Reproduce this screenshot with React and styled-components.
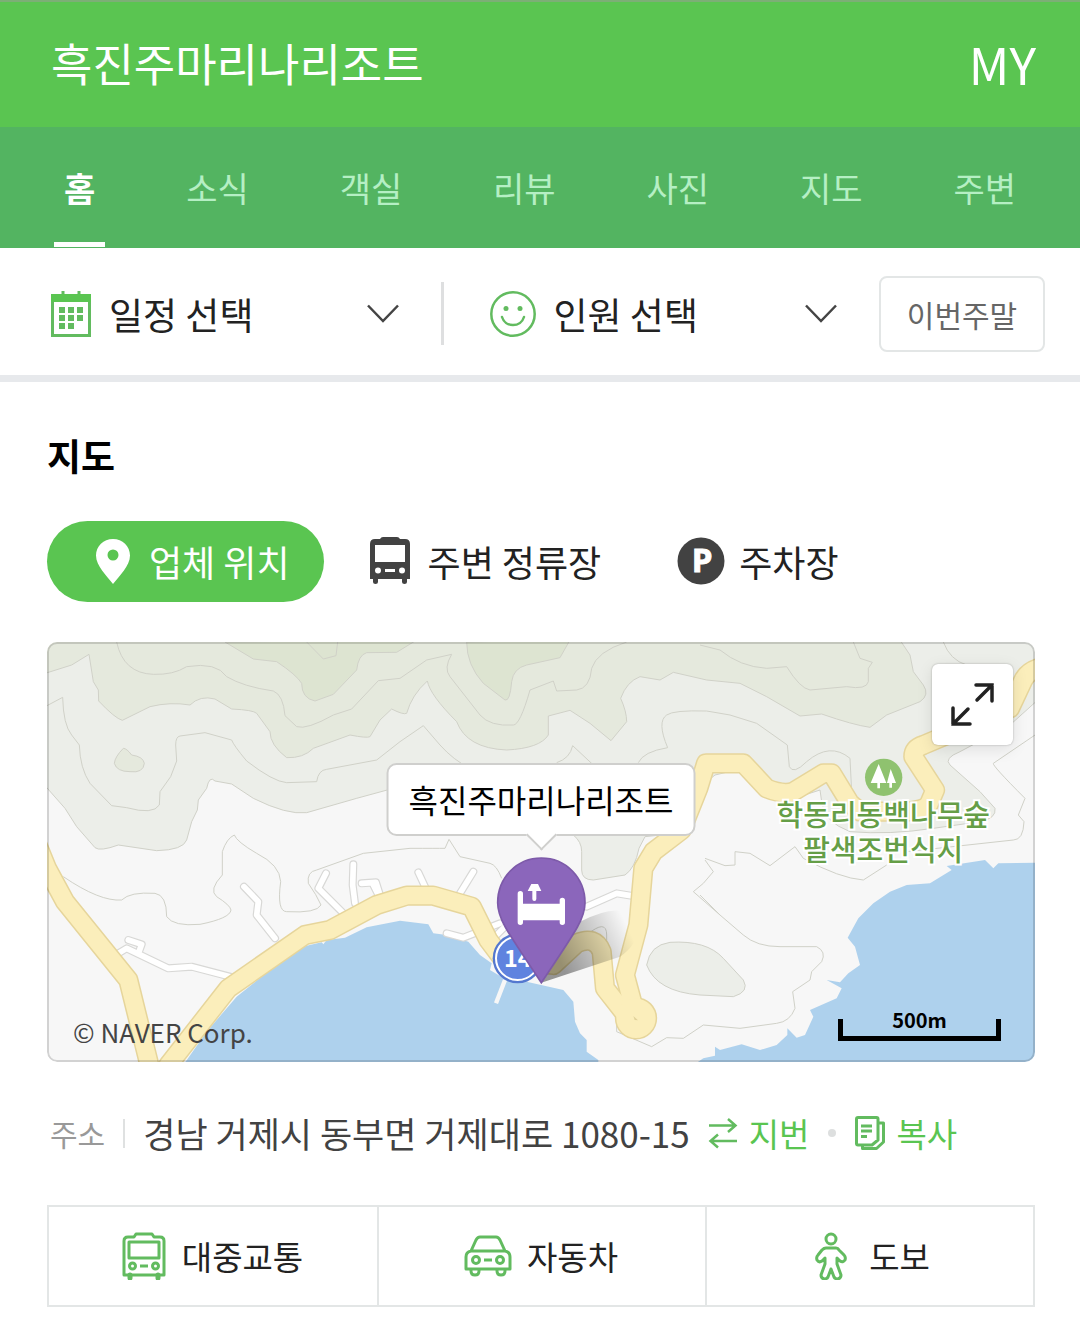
import React, { useState } from 'react'
import styled, { createGlobalStyle, ThemeProvider } from 'styled-components'

const theme = {
    green: '#5ac551',
    greenDark: '#53b461',
    mint: '#b5efc4',
    line: '#e3e6e6',
    text: '#222222',
    grey: '#666666',
}

const tabs = ['홈', '소식', '객실', '리뷰', '사진', '지도', '주변']

const App = () => {
    const [tab, setTab] = useState('홈')
    const [place, setPlace] = useState('업체 위치')

    return (
        <ThemeProvider theme={theme}>
            <GlobalStyle />
            <Header>
                <Title>흑진주마리나리조트</Title>
                <MyLink href="#my">MY</MyLink>
            </Header>
            <Nav>
                {tabs.map(name => (
                    <Tab key={name} $active={tab === name} onClick={() => setTab(name)}>{name}</Tab>
                ))}
            </Nav>
            <FilterBar>
                <Picker>
                    <CalendarIcon />
                    <PickerLabel>일정 선택</PickerLabel>
                    <Chevron />
                </Picker>
                <PickerDivider />
                <Picker>
                    <SmileIcon />
                    <PickerLabel>인원 선택</PickerLabel>
                    <Chevron />
                </Picker>
                <WeekendButton>이번주말</WeekendButton>
            </FilterBar>
            <Section>
                <Heading>지도</Heading>
                <Chips>
                    <Chip $active={place === '업체 위치'} onClick={() => setPlace('업체 위치')}>
                        <PinIcon />업체 위치
                    </Chip>
                    <Chip $active={place === '주변 정류장'} onClick={() => setPlace('주변 정류장')}>
                        <BusSolidIcon />주변 정류장
                    </Chip>
                    <Chip $active={place === '주차장'} onClick={() => setPlace('주차장')}>
                        <ParkingIcon />주차장
                    </Chip>
                </Chips>
                <MapBox>
                    <MapDrawing />
                    <ParkLabel>학동리동백나무숲<br />팔색조번식지</ParkLabel>
                    <PlaceTip>흑진주마리나리조트</PlaceTip>
                    <ExpandButton aria-label="지도 크게 보기"><ExpandIcon /></ExpandButton>
                    <Copyright>© NAVER Corp.</Copyright>
                    <Scale>500m</Scale>
                </MapBox>
                <Address>
                    <AddressLabel>주소</AddressLabel>
                    <AddressText>경남 거제시 동부면 거제대로 1080-15</AddressText>
                    <AddressButton><SwapIcon />지번</AddressButton>
                    <Dot />
                    <AddressButton><CopyIcon />복사</AddressButton>
                </Address>
                <Routes>
                    <Route href="#transit"><BusIcon />대중교통</Route>
                    <Route href="#car"><CarIcon />자동차</Route>
                    <Route href="#walk"><WalkIcon />도보</Route>
                </Routes>
            </Section>
        </ThemeProvider>
    )
}

const CalendarIcon = () => (
    <svg width="40" height="46" viewBox="0 0 40 46" fill="#62bb5f">
        <path d="M0 3h10.500V0h3v3h13V0h3v3H40v43H0zM3 11v32h34V11z" fillRule="evenodd" />
        <path d="M8 16h6v6H8zM17 16h6v6h-6zM26 16h6v6h-6zM8 24h6v6H8zM17 24h6v6h-6zM26 24h6v6h-6zM8 32h6v6H8zM17 32h6v6h-6z" />
        <path d="M0 3h40v8H0z" fill="#5ac551" />
    </svg>
)

const SmileIcon = () => (
    <svg width="46" height="48" viewBox="1 0 46 48" fill="none" stroke="#62bb5f" strokeWidth="2.500">
        <circle cx="24" cy="24" r="21.700" />
        <path d="M13 27c1.500 5 6 8 11 8s9.500-3 11-8" strokeLinecap="round" />
        <circle cx="17" cy="18.500" r="2.500" fill="#62bb5f" stroke="none" />
        <circle cx="31" cy="18.500" r="2.500" fill="#62bb5f" stroke="none" />
    </svg>
)

const Chevron = () => (
    <svg width="32" height="20" viewBox="0 0 32 20" fill="none" stroke="#444" strokeWidth="2.500">
        <path d="M1 1.500L16 17 31 1.500" />
    </svg>
)

const PinIcon = () => (
    <svg width="48" height="48" viewBox="0 0 48 48">
        <path d="M26 2C16.500 2 9 9.300 9 18.500 9 29 20 39 26 47c6-8 17-18 17-28.500C43 9.300 35.500 2 26 2zm0 10.500a5.500 5.500 0 1 1 0 11 5.500 5.500 0 0 1 0-11z" fill="currentColor" fillRule="evenodd" />
    </svg>
)

const BusSolidIcon = () => (
    <svg width="48" height="48" viewBox="0 0 48 48">
        <path d="M17 0h14q2 0 3 2h5q5 0 5 5v35h-3v3q0 2-2.500 2T36 45v-3H12v3q0 2-2.500 2T7 45v-3H4V7q0-5 5-5h5q1-2 3-2z" fill="#424242" />
        <path d="M9 8h30v17H9zM19 32h10v3H19z" fill="#fff" />
        <circle cx="12" cy="33.500" r="3" fill="#fff" />
        <circle cx="36" cy="33.500" r="3" fill="#fff" />
    </svg>
)

const ParkingIcon = () => (
    <svg width="48" height="48" viewBox="0 0 48 48">
        <circle cx="24" cy="24" r="23.500" fill="#424242" />
        <text x="25" y="35" textAnchor="middle" fontFamily="Open Sans, sans-serif" fontSize="33" fontWeight="700" fill="#fff" stroke="#fff" strokeWidth="1">P</text>
    </svg>
)

const ExpandIcon = () => (
    <svg width="46" height="46" viewBox="0 0 46 46" fill="none" stroke="#222" strokeWidth="3.500" strokeLinecap="round">
        <path d="M26 3h16v16M42 3L27 18M3 26v16h17M3 42l15-15" />
    </svg>
)

const SwapIcon = () => (
    <svg width="30" height="32" viewBox="0 0 30 32" fill="none" stroke="#62bb5f" strokeWidth="2.500">
        <path d="M1 8.500h27M20 2l7.500 6.500L20 15M29 24H2M10 17.500L2.500 24l7.500 6.500" />
    </svg>
)

const CopyIcon = () => (
    <svg width="30" height="34" viewBox="0 0 30 34" fill="none" stroke="#62bb5f" strokeWidth="3" strokeLinejoin="round">
        <path d="M3 1.500h18.500q1.500 0 1.500 1.500v21l-6 5H3Q1.500 29 1.500 27.500V3Q1.500 1.500 3 1.500zM24 7h4.500v19l-7 6.500H7.500V29M6 10h11M6 15h11M6 20.500h6" />
    </svg>
)

const BusIcon = () => (
    <svg width="46" height="48" viewBox="0 0 46 48" fill="none" stroke="#62bb5f" strokeWidth="3" strokeLinejoin="round">
        <path d="M15 2h16l2 3h6q4 0 4 4v34H3V9q0-4 4-4h6zM8 10h30v16H8zM19 34h8" />
        <circle cx="11.500" cy="34" r="3" />
        <circle cx="34.500" cy="34" r="3" />
        <path d="M9 43v3M37 43v3" strokeWidth="5" strokeLinecap="round" />
    </svg>
)

const CarIcon = () => (
    <svg width="48" height="42" viewBox="0 0 48 42" fill="none" stroke="#62bb5f" strokeWidth="3" strokeLinejoin="round">
        <path d="M7 16l5-11q1.500-3 4-3h16q2.500 0 4 3l5 11M7 16h34q5 1 5 6v12H2V22q0-5 5-6zM20 25h8" />
        <circle cx="12" cy="25" r="3.500" />
        <circle cx="36" cy="25" r="3.500" />
        <path d="M7 34v2q0 4 4 4t4-4v-2M33 34v2q0 4 4 4t4-4v-2" />
    </svg>
)

const WalkIcon = () => (
    <svg width="46" height="48" viewBox="0 0 46 48" fill="none" stroke="#62bb5f" strokeWidth="3" strokeLinejoin="round">
        <circle cx="23" cy="7" r="5" />
        <path d="M18 16h10q2 0 3 2l5 5q2 2 1 5-2 3-5 1l-3-3v6l4 11q0 3-3 4-3 0-4-2l-3-8-3 8q-1 2-4 2-3-1-3-4l4-11v-6l-3 3q-3 2-5-1-1-3 1-5l4-5q2-2 4-2z" />
    </svg>
)

// Drawn three units to the pixel
const roadNorth = 'M1790 1150L1755 1020 1795 870 1810 700 1840 650 1925 585 1975 460 1998 385H2110L2180 460Q2230 480 2260 470L2350 415H2375L2430 505 2460 530H2580Q2660 530 2670 500L2685 465 2620 365Q2620 340 2650 330L2910 220 2950 135Q2965 105 3010 95'
const roadCoast = 'M385 1290L565 1060 795 900 870 885 1010 810 1100 782H1180L1295 815 1345 915 1390 975 1540 990 1610 925Q1665 900 1685 950L1695 1060 1750 1130 1790 1180'
const roadWest = 'M-20 600L21 700 75 800 265 1035 328 1290'
const lanes = 'M235 955L260 940 385 1000 455 995 570 1025M297 950L305 928 265 915M612 755L655 800 650 840 705 910M858 715L835 760 910 835M940 688L938 750 945 805M965 745L1008 742 1020 780M1135 712L1155 755M1300 710L1260 775M1000 750L1020 790M1220 895L1270 908 1380 865M1360 910L1410 860M1640 815L1730 775 1790 785'

const MapDrawing = () => (
    <MapSvg viewBox="21 21 2964 1260" preserveAspectRatio="xMidYMid slice" role="img" aria-label="지도">
        <defs>
            <linearGradient id="pinShadow" gradientUnits="userSpaceOnUse" x1="1560" y1="980" x2="1765" y2="880">
                <stop offset="0" stopColor="#000" stopOpacity="0.4" />
                <stop offset="1" stopColor="#000" stopOpacity="0" />
            </linearGradient>
        </defs>
        <path fill="#f7f7f7" d="M0 0h3010v1300H0z" />
        <g stroke="#d0d1c8" strokeWidth="3" strokeLinejoin="round">
            <path fill="#eceee9" d="M0 0V435L75 520 110 575 165 638Q180 650 235 630L350 647Q430 645 440 615L455 560 472 525 475 495 500 460Q508 420 525 438L575 447 640 490Q740 540 800 533L950 490 1060 460 1400 480 1600 600Q1625 620 1625 650V705Q1625 735 1660 735L1755 720Q1785 700 1797 640L1815 605 1880 598 1950 480 2025 420 2110 400 2180 480Q2250 500 2340 465L2345 500Q2350 560 2430 590 2550 600 2680 580L2820 560Q2870 550 2865 520L2820 470 2730 390Q2710 370 2760 350L2910 270 3010 180V0z" />
            <path fill="#e5e9dd" d="M0 120L95 90 147 58 160 140 175 165 176 198Q225 250 247 256L330 215Q390 200 450 210 480 180 525 192L575 222Q640 225 650 235L690 290Q690 330 740 368 790 370 820 340L930 300Q980 310 990 305L1020 255 1055 222Q1090 240 1100 235 1115 180 1162 138 1170 180 1250 260 1280 340 1400 345 1500 340 1525 300V243L1590 226 1650 265 1713 317 1760 260Q1760 230 1742 190 1760 140 1800 125L1860 135 1900 112 2000 135 2100 145 2180 185 2280 243 2345 237Q2440 270 2490 277L2540 240 2640 200Q2670 180 2650 150L2620 110 2610 60 2570 0H0z" />
            <path fill="#dde4d1" d="M555 21L640 72 710 80Q770 120 785 145 785 190 825 198L880 178 950 105Q955 60 980 53L1070 52 1130 15zM1280 21Q1280 90 1330 145L1395 195Q1410 200 1415 140 1420 100 1460 90L1560 68 1590 15z" />
            <path fill="#e5e9dd" d="M250 340Q225 365 223 385 230 410 270 410 310 415 313 385 310 365 275 360 260 340 250 340z" />
            <path fill="#eceee9" d="M1820 990Q1830 930 1890 922 2000 915 2050 970L2110 1035Q2130 1070 2080 1085L1980 1080Q1850 1070 1820 990z" />
            <path fill="none" d="M21 212L68 187Q70 270 95 300L118 330Q120 400 150 445L215 512 260 518Q340 540 358 510L360 470 392 425 410 378 407 330Q407 305 420 303L495 293 575 315Q580 330 620 378 700 440 740 443L830 440Q835 405 860 403L1010 375 1080 320 1150 272 1200 330Q1240 375 1290 400M1550 383Q1590 370 1598 332L1660 390M1795 383Q1810 350 1883 338 1850 260 1880 240 1900 225 2000 228L2070 240 2150 265 2242 330 2248 395Q2260 420 2300 380 2370 320 2430 370L2435 470 2450 495" />
            <path fill="none" d="M230 21Q250 115 340 118 400 120 440 95 530 80 560 125 610 155 700 168 730 180 735 242L770 275Q800 285 880 240L935 222 1015 137 1080 130 1160 75 1235 58Q1210 100 1230 125L1320 240Q1350 275 1420 270 1440 270 1470 165L1540 138 1550 168 1610 165Q1650 160 1655 100 1670 50 1760 21M800 21L850 72 888 62 893 21M1980 30L2040 45Q2100 95 2180 100L2240 95Q2280 160 2310 165L2420 155Q2480 165 2485 140V100L2497 82 2460 70 2440 21M2710 21Q2730 75 2780 90L2900 140" />
            <path fill="none" d="M70 725Q180 800 245 795 270 770 345 775 380 780 380 845 400 875 480 868 570 850 573 825 570 810 530 785 505 765 547 720V650Q560 610 583 600 590 620 650 655 720 690 722 740 710 830 740 830 830 835 843 810 830 780 805 745 800 710 830 705L970 655 1110 640Q1190 640 1215 640L1227 613 1260 665 1350 685Q1370 690 1385 730" />
            <path fill="none" d="M1980 780L2040 840 2110 900Q2150 935 2220 935H2330Q2360 950 2345 980L2315 1010 2310 1035 2258 1070 2265 1120Q2250 1160 2210 1165L2100 1180 1990 1170 1930 1210 1880 1208 1835 1235 1730 1190V1150M1995 675L2020 710 1990 745 1960 770 2040 840M1995 670L2055 692 2085 690V650L2130 655 2190 692 2265 635 2290 670Q2400 730 2470 735L2540 690M2985 300L2860 385Q2855 390 2955 490L2935 540 2952 560Q2950 615 2920 615L2600 650M1640 900Q1700 850 1700 900V980" />
        </g>
        <g fill="#aed1ed">
            <path d="M430 1290L500 1190 590 1085 740 965 800 932 845 922 850 928 860 915 915 908 980 877 1080 857 1165 868 1180 895 1220 900 1285 920 1320 960 1355 985 1350 1005 1400 1035 1460 1040 1570 1065 1600 1100 1605 1160 1620 1195 1640 1215V1250L1675 1275V1290z" />
            <path d="M1960 1290L1990 1270 2025 1262V1235L2040 1245 2105 1228 2160 1245 2210 1230 2242 1200V1180L2270 1208 2295 1200 2320 1145 2310 1125 2390 1090 2405 1060 2360 1035 2400 1042 2425 1015 2460 990 2445 935 2423 908 2455 850 2500 805 2550 770 2600 750 2670 745 2735 705 2720 693 2835 675 2845 685 2860 700 2875 685 3010 683V1290z" />
        </g>
        <path d="M1395 1035L1368 1105" stroke="#f7f7f7" strokeWidth="13" />
        <g fill="none" strokeLinecap="round" strokeLinejoin="round">
            <path d={lanes} stroke="#d8d8d6" strokeWidth="24" />
            <path d={lanes} stroke="#fff" strokeWidth="17" />
            <g strokeWidth="61" stroke="#e6d59b"><path d={roadWest} /><path d={roadCoast} /><path d={roadNorth} /></g>
            <circle cx="1788" cy="1150" r="35" strokeWidth="57" stroke="#e6d59b" />
            <g strokeWidth="52" stroke="#fbeebb"><path d={roadWest} /><path d={roadCoast} /><path d={roadNorth} /></g>
            <circle cx="1788" cy="1150" r="35" strokeWidth="48" stroke="#fbeebb" />
        </g>
        <path d="M1780 1143l14 13-10-1z" fill="#e0d19a" />
        <circle cx="1433" cy="970" r="75" fill="#5478cf" />
        <circle cx="1433" cy="970" r="65" fill="#5f83df" stroke="#fff" strokeWidth="6" />
        <text x="1433" y="995" textAnchor="middle" fontSize="70" fontWeight="700" fill="#fff">14</text>
        <path d="M1504 1043L1620 860Q1780 780 1790 890 1790 930 1740 965z" fill="url(#pinShadow)" />
        <path d="M1504 669C1430 669 1373 728 1373 803 1373 850 1398 885 1504 1043 1610 885 1635 850 1635 803 1635 728 1578 669 1504 669z" fill="#8b66bb" stroke="#7d5aa9" strokeWidth="5" />
        <path d="M1433 776q0-8 8-8t8 8v30h110v-10q0-8 8-8t8 8v66q0 8-8 8t-8-8v-6h-110v6q0 8-8 8t-8-8zM1474 747h20l10 21h-15v24q0 6-6 6t-6-6v-24h-14z" fill="#fff" />
        <circle cx="2531" cy="427" r="56" fill="#8fc26f" />
        <path d="M2516 387l23 57h-19v16h-8v-16h-20zM2552 402l16 42h-12v14h-8v-14h-7l4-16z" fill="#fff" />
    </MapSvg>
)

const GlobalStyle = createGlobalStyle`
    * {
        box-sizing: border-box;
    }
    body {
        margin: 0;
        background: #fff;
        color: #222;
        font-family: 'Noto Sans CJK KR', sans-serif;
    }
    button {
        padding: 0;
        border: none;
        background: none;
        color: inherit;
        font-family: inherit;
        white-space: nowrap;
        cursor: pointer;
    }
    a {
        color: inherit;
        text-decoration: none;
    }
    svg {
        flex: none;
    }
`

const Header = styled.header`
    display: flex;
    justify-content: space-between;
    align-items: center;
    height: 127px;
    padding: 0 44px 4px 51px;
    border-top: 2px solid #7caf76;
    background-color: ${props => props.theme.green};
    color: white;
`

const Title = styled.h1`
    margin: 0;
    font-size: 45px;
    font-weight: 400;
    line-height: 60px;
`

const MyLink = styled.a`
    font-size: 50px;
    line-height: 60px;
`

const Nav = styled.nav`
    display: flex;
    justify-content: space-between;
    height: 121px;
    padding: 0 64px;
    background-color: ${props => props.theme.greenDark};
`

const Tab = styled.button`
    position: relative;
    font-size: 34px;
    font-weight: ${props => props.$active ? 700 : 400};
    color: ${props => props.$active ? 'white' : props.theme.mint};

    &::after {
        content: '';
        display: ${props => props.$active ? 'block' : 'none'};
        position: absolute;
        right: -10px;
        bottom: 1px;
        left: -10px;
        height: 5px;
        background-color: white;
    }
`

const FilterBar = styled.div`
    display: flex;
    align-items: center;
    gap: 42px;
    height: 134px;
    padding: 4px 35px 0 51px;
    border-bottom: 7px solid #e7e9ec;
`

const Picker = styled.button`
    display: flex;
    flex: 1;
    align-items: center;
    gap: 18px;
    font-size: 37px;
    line-height: 48px;
`

const PickerLabel = styled.span`
    flex: 1;
    text-align: left;
`

const PickerDivider = styled.div`
    width: 3px;
    height: 63px;
    margin-right: 4px;
    background-color: #dedfe0;
`

const WeekendButton = styled.button`
    width: 166px;
    height: 76px;
    border: 2px solid ${props => props.theme.line};
    border-radius: 8px;
    font-size: 30px;
    color: ${props => props.theme.grey};
`

const Section = styled.section`
    padding: 49px 45px 36px 47px;
`

const Heading = styled.h2`
    margin: 0 0 42px;
    font-size: 37px;
    font-weight: 700;
    line-height: 48px;
    color: black;
`

const Chips = styled.div`
    display: flex;
    gap: 2px;
    margin-bottom: 40px;
`

const Chip = styled.button`
    display: flex;
    align-items: center;
    gap: 14px;
    height: 81px;
    padding: 0 34px 2px 40px;
    border-radius: 41px;
    font-size: 36px;
    color: ${props => props.$active ? 'white' : props.theme.text};
    background-color: ${props => props.$active ? props.theme.green : 'transparent'};
`

const MapBox = styled.div`
    position: relative;
    height: 420px;
    border-radius: 10px;
    overflow: hidden;

    &::after {
        content: '';
        position: absolute;
        inset: 0;
        border: 2px solid rgba(0, 0, 0, 0.15);
        border-radius: 10px;
        pointer-events: none;
    }
`

const MapSvg = styled.svg`
    display: block;
    width: 100%;
    height: 100%;
`

const ParkLabel = styled.div`
    position: absolute;
    top: 154px;
    right: 45px;
    font-size: 29px;
    font-weight: 500;
    line-height: 35px;
    text-align: center;
    color: #659e47;
    -webkit-text-stroke: 4px white;
    paint-order: stroke fill;
`

const PlaceTip = styled.div`
    position: absolute;
    top: 121px;
    left: 50%;
    padding: 0 20px;
    transform: translateX(-50%);
    border: 2px solid #cfcfcd;
    border-radius: 10px;
    background-color: white;
    font-size: 32px;
    line-height: 69px;
    white-space: nowrap;
    color: black;

    &::after {
        content: '';
        position: absolute;
        bottom: -12px;
        left: 50%;
        width: 20px;
        height: 20px;
        margin-left: -10px;
        border: solid #cfcfcd;
        border-width: 0 2px 2px 0;
        background-color: white;
        transform: rotate(45deg);
    }
`

const ExpandButton = styled.button`
    display: flex;
    position: absolute;
    top: 22px;
    right: 22px;
    justify-content: center;
    align-items: center;
    width: 81px;
    height: 81px;
    border-radius: 6px;
    background-color: white;
    box-shadow: 0 0 2px rgba(0, 0, 0, 0.3), 0 4px 16px rgba(0, 0, 0, 0.1);
`

const Copyright = styled.div`
    position: absolute;
    bottom: 12px;
    left: 26px;
    font-size: 26px;
    line-height: 36px;
    color: #444;
`

const Scale = styled.div`
    position: absolute;
    right: 34px;
    bottom: 21px;
    width: 163px;
    height: 22px;
    border: solid black;
    border-width: 0 5px 5px;
    font-size: 20px;
    font-weight: 700;
    line-height: 2px;
    text-align: center;
    color: black;
`

const Address = styled.div`
    display: flex;
    align-items: center;
    margin: 47px 0 48px;
    padding-left: 3px;
    font-size: 35px;
    line-height: 48px;
    white-space: nowrap;
`

const AddressLabel = styled.span`
    display: flex;
    align-items: center;
    font-size: 30px;
    color: #999;

    &::after {
        content: '';
        width: 2px;
        height: 29px;
        margin: 0 18px;
        background-color: #dfe1e1;
    }
`

const AddressText = styled.span`
    margin-right: 18px;
    color: #424242;
`

const AddressButton = styled.button`
    display: flex;
    align-items: center;
    gap: 11px;
    font-size: 33px;
    line-height: 48px;
    color: ${props => props.theme.green};
`

const Dot = styled.span`
    width: 8px;
    height: 8px;
    margin: 0 19px;
    border-radius: 50%;
    background-color: #dddfdf;
`

const Routes = styled.div`
    display: grid;
    grid-template-columns: repeat(3, 1fr);
    height: 102px;
    border: 2px solid ${props => props.theme.line};
`

const Route = styled.a`
    display: flex;
    justify-content: center;
    align-items: center;
    gap: 15px;
    padding-right: 2px;
    font-size: 33px;

    & + & {
        border-left: 2px solid ${props => props.theme.line};
    }
`

export default App
